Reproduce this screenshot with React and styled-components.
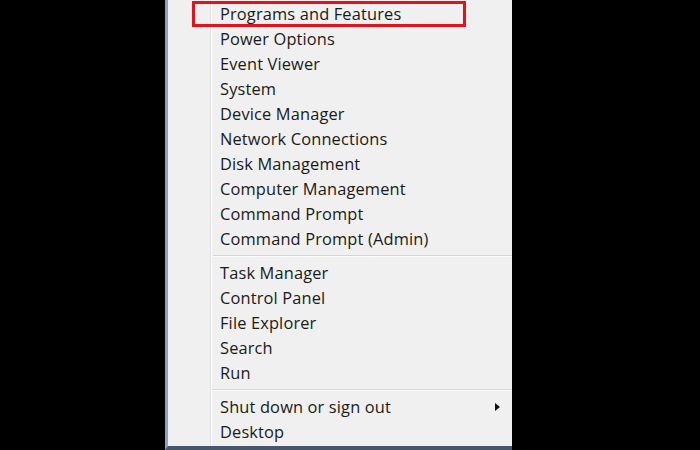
import React from "react";
import styled, { createGlobalStyle } from "styled-components";

const Global = createGlobalStyle`
  html, body { margin: 0; padding: 0; background: #000; }
  body { width: 700px; height: 450px; overflow: hidden; }
`;

const Stage = styled.div`
  width: 700px;
  height: 450px;
  background: #000;
  display: flex;
  padding-left: 165px;
  box-sizing: border-box;
`;

const Panel = styled.div`
  width: 347px;
  height: 450px;
  box-sizing: border-box;
  border-left: 3px solid #8da2c2;
  border-bottom: 4px solid #47566a;
  padding-top: 1px;
  display: flex;
  flex-direction: column;
  background: linear-gradient(
    to right,
    #f0f0f0 42px,
    #e2e2e2 42px,
    #e2e2e2 43px,
    #fbfbfb 43px,
    #fbfbfb 44px,
    #f0f0f0 44px
  );
  font-family: "Open Sans", "Noto Sans", sans-serif;
  font-size: 16.4px;
  font-weight: 500;
  color: #1a1a1a;
`;

const Row = styled.div`
  position: relative;
  height: 25px;
  flex: none;
  display: flex;
  align-items: center;
  padding-left: 52px;
  padding-right: 12px;
  white-space: nowrap;

  ${({ $marked }) =>
    $marked &&
    `
    &::after {
      content: "";
      position: absolute;
      left: 24px;
      right: 46px;
      top: 0px;
      bottom: -1px;
      border: 3px solid #e4131b;
    }
  `}
`;

const Label = styled.span`
  letter-spacing: 0.15px;
`;

const Arrow = styled.span`
  margin-left: auto;
  width: 0;
  height: 0;
  border-top: 4px solid transparent;
  border-bottom: 4px solid transparent;
  border-left: 5px solid #111;
`;

const Separator = styled.div`
  flex: none;
  height: 9px;
  display: flex;
  align-items: center;
  padding-left: 45px;

  &::before {
    content: "";
    flex: 1;
    height: 1px;
    background: #d6d6d6;
    box-shadow: 0 1px 0 #fcfcfc;
  }
`;

const groups = [
  [
    "Programs and Features",
    "Power Options",
    "Event Viewer",
    "System",
    "Device Manager",
    "Network Connections",
    "Disk Management",
    "Computer Management",
    "Command Prompt",
    "Command Prompt (Admin)",
  ],
  ["Task Manager", "Control Panel", "File Explorer", "Search", "Run"],
  ["Shut down or sign out", "Desktop"],
];

export default function App() {
  return (
    <Stage>
      <Global />
      <Panel>
        {groups.map((g, gi) => (
          <React.Fragment key={gi}>
            {gi > 0 && <Separator />}
            {g.map((label) => (
              <Row key={label} $marked={label === "Programs and Features"}>
                <Label>{label}</Label>
                {label === "Shut down or sign out" && <Arrow />}
              </Row>
            ))}
          </React.Fragment>
        ))}
      </Panel>
    </Stage>
  );
}
